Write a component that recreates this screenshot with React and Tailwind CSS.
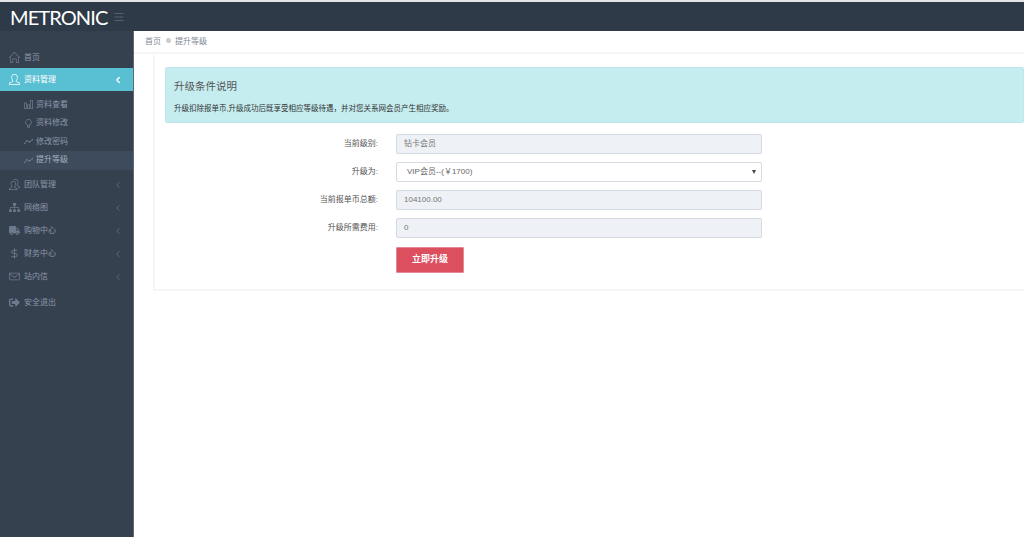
import { ChevronLeft, DollarSign, Menu } from "lucide-react";
import { SlHome, SlUser, SlChart, SlBulb, SlGraph, SlPeople, SlEnvolope } from "react-icons/sl";
import { FaSitemap, FaTruck, FaSignOutAlt } from "react-icons/fa";

const font = "font-['Liberation_Sans','Noto_Sans_CJK_SC',sans-serif]";

const NavItem = ({ icon: Icon, label, arrow = true, className = "" }) => (
  <div className={`flex items-center h-[23px] pl-[9px] pr-[10px] text-[#8b97a8] ${className}`}>
    <Icon size={11} className="shrink-0 text-[#6d7a8e]" />
    <span className="ml-[4px] text-[8px] flex-1">{label}</span>
    {arrow && <ChevronLeft size={10} className="text-[#5f6c7e]" />}
  </div>
);

const SubItem = ({ icon: Icon, label, active }) => (
  <div className={`flex items-center h-[18.5px] pl-[24px] text-[8px] ${active ? "bg-[#3e4b5c] text-[#a3afbf]" : "text-[#8b97a8]"}`}>
    <Icon size={9} className="shrink-0 text-[#7d8a9c]" />
    <span className="ml-[3px]">{label}</span>
  </div>
);

const Field = ({ label, value }) => (
  <div className="flex items-center h-[20px]">
    <label className="w-[224px] text-right text-[8px] text-[#555]">{label}</label>
    <div className="ml-[18px] w-[366px] h-[20px] flex items-center px-[7px] text-[8px] text-[#777] bg-[#eef1f5] border border-[#d5dae3] rounded-[2px]">
      {value}
    </div>
  </div>
);

export default function App() {
  return (
    <div className={`${font} w-[1024px] h-[537px] overflow-hidden flex flex-col bg-white`}>
      <div className="h-[2px] bg-[#e4e4e4]" />
      <header className="h-[29px] bg-[#2f3a49] flex items-center pl-[10px]">
        <span className="text-white text-[20px] font-['Lato',sans-serif] leading-none tracking-[-0.9px]">METRONIC</span>
        <Menu size={12} strokeWidth={1.2} className="ml-[6px] text-[#6f7b8c]" />
      </header>

      <div className="flex flex-1 min-h-0">
        <aside className="w-[134px] bg-[#364150] border-r border-[#5f6a78] pt-[14px] shrink-0">
          <NavItem icon={SlHome} label="首页" arrow={false} className="translate-y-[1px]" />
          <div className="h-[23px] bg-[#59c0d3] flex items-center pl-[9px] pr-[10px] text-white">
            <SlUser size={11} className="shrink-0" />
            <span className="ml-[4px] text-[8px] flex-1">资料管理</span>
            <ChevronLeft size={10} strokeWidth={3} />
          </div>
          <div className="pt-[4.5px] pb-[3.5px]">
            <SubItem icon={SlChart} label="资料查看" />
            <SubItem icon={SlBulb} label="资料修改" />
            <SubItem icon={SlGraph} label="修改密码" />
            <SubItem icon={SlGraph} label="提升等级" active />
          </div>
          <NavItem icon={SlPeople} label="团队管理" />
          <NavItem icon={FaSitemap} label="网络图" />
          <NavItem icon={FaTruck} label="购物中心" />
          <NavItem icon={DollarSign} label="财务中心" />
          <NavItem icon={SlEnvolope} label="站内信" />
          <NavItem icon={FaSignOutAlt} label="安全退出" arrow={false} className="mt-[3px]" />
        </aside>

        <main className="flex-1 min-w-0">
          <div className="h-[23px] flex items-center pl-[11px] text-[8px] text-[#7f8a96] border-b-2 border-[#f4f5f7]">
            <span>首页</span>
            <span className="w-[5px] h-[5px] rounded-full bg-[#ccc] mx-[4.5px] mb-[3px]" />
            <span>提升等级</span>
          </div>

          <div className="ml-[19px] mt-[1px] h-[236px] bg-white border-l-2 border-b-2 border-[#f4f5f7] pl-[10px] pt-[12px]">
            <div className="h-[56px] bg-[#c5edf0] border border-[#bfe6ea] rounded-[2px] pl-[8px] pt-[10px]">
              <h4 className="text-[10.5px] leading-[16px] text-[#555]">升级条件说明</h4>
              <p className="mt-[9px] text-[7.5px] leading-[12px] text-[#333]">升级扣除报单币,升级成功后既享受相应等级待遇，并对您关系网会员产生相应奖励。</p>
            </div>

            <div className="mt-[11px] flex flex-col gap-[8px] -ml-[11px]">
              <Field label="当前级别:" value="钻卡会员" />
              <div className="flex items-center h-[20px]">
                <label className="w-[224px] text-right text-[8px] text-[#555]">升级为:</label>
                <div className="ml-[18px] w-[366px] h-[20px] flex items-center justify-between pl-[10px] pr-[5px] text-[8px] text-[#666] bg-white border border-[#d5dae3] rounded-[2px]">
                  <span>VIP会员--(￥1700)</span>
                  <span className="border-x-[2.5px] border-x-transparent border-t-[4px] border-t-[#444]" />
                </div>
              </div>
              <Field label="当前报单币总额:" value="104100.00" />
              <Field label="升级所需费用:" value="0" />
              <div className="pl-[242px] -mt-[1px]">
                <button className="w-[68px] h-[26px] bg-[#dc4f5f] text-white text-[9px] font-bold rounded-[1px] border border-[#e58a94]">立即升级</button>
              </div>
            </div>
          </div>
        </main>
      </div>
    </div>
  );
}
